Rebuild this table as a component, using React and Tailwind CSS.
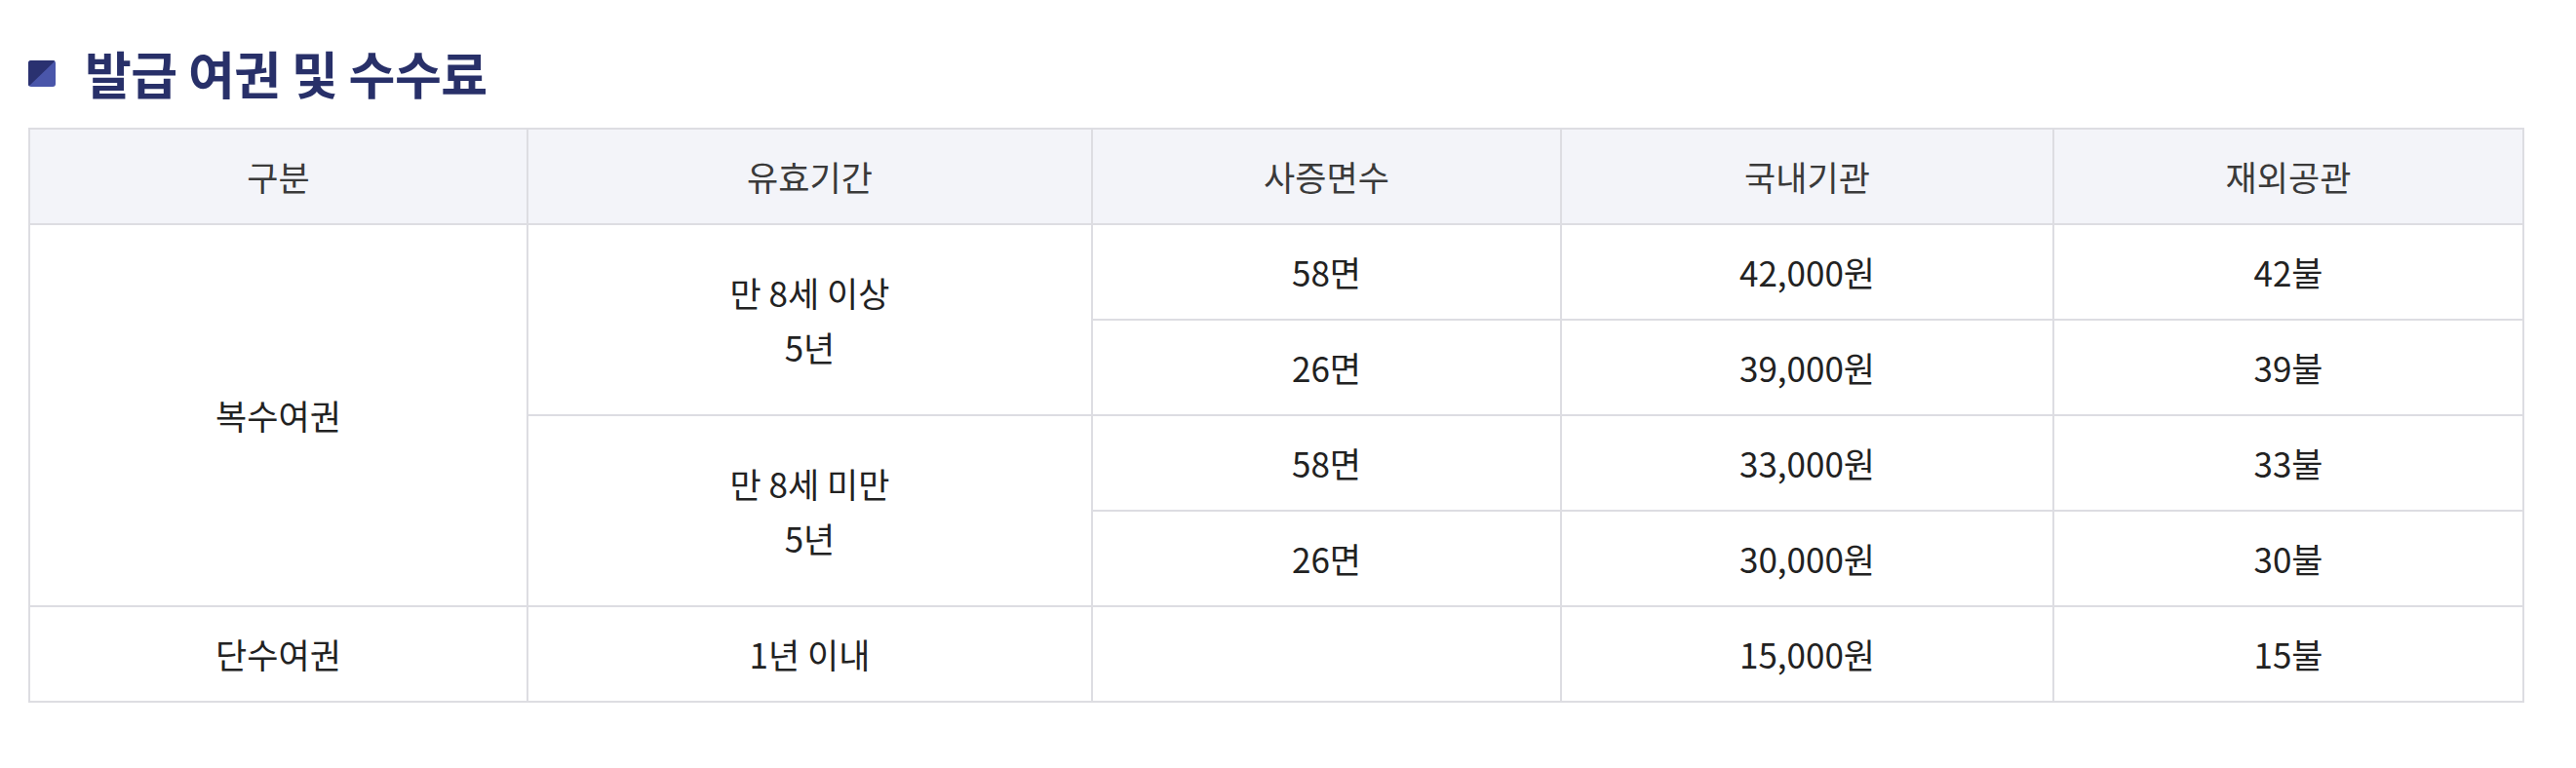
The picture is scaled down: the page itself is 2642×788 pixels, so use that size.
const rows = [
  { pages: "58면", domestic: "42,000원", abroad: "42불" },
  { pages: "26면", domestic: "39,000원", abroad: "39불" },
  { pages: "58면", domestic: "33,000원", abroad: "33불" },
  { pages: "26면", domestic: "30,000원", abroad: "30불" },
];

function TitleIcon() {
  return (
    <svg width="28" height="27" viewBox="0 0 28 27" className="shrink-0">
      <defs>
        <clipPath id="r">
          <rect x="0" y="0" width="28" height="27" rx="3" />
        </clipPath>
      </defs>
      <g clipPath="url(#r)">
        <rect x="0" y="0" width="28" height="27" fill="#4a56aa" />
        <polygon points="0,0 28,0 0,27" fill="#2a3170" />
      </g>
    </svg>
  );
}

export default function App() {
  const cell = "border-2 border-[#dddde2] text-center align-middle";
  return (
    <div className="w-[2642px] h-[788px] bg-white font-['Noto_Sans_CJK_KR',sans-serif]">
      <div className="pl-[29px] pt-[44px] pr-[52px]">
        {/* Title */}
        <div className="flex items-center gap-[30px] h-[62px]">
          <TitleIcon />
          <h2 className="text-[52px] font-bold text-[#283069] leading-none tracking-[-0.5px]">
            발급 여권 및 수수료
          </h2>
        </div>

        {/* Fee table */}
        <table className="mt-[25px] w-[2558px] table-fixed border-collapse text-[35px] leading-[1.6]">
          <colgroup>
            <col className="w-[511px]" />
            <col className="w-[579px]" />
            <col className="w-[481px]" />
            <col className="w-[505px]" />
            <col className="w-[482px]" />
          </colgroup>
          <thead>
            <tr className="h-[98px] bg-[#f3f4f9] text-[#3a3a3a]">
              <th className={`${cell} font-normal`}>구분</th>
              <th className={`${cell} font-normal`}>유효기간</th>
              <th className={`${cell} font-normal`}>사증면수</th>
              <th className={`${cell} font-normal`}>국내기관</th>
              <th className={`${cell} font-normal`}>재외공관</th>
            </tr>
          </thead>
          <tbody className="text-[#222]">
            {rows.map((r, i) => (
              <tr key={i} className="h-[98px]">
                {i === 0 && (
                  <td rowSpan={4} className={cell}>
                    복수여권
                  </td>
                )}
                {i === 0 && (
                  <td rowSpan={2} className={cell}>
                    만 8세 이상
                    <br />
                    5년
                  </td>
                )}
                {i === 2 && (
                  <td rowSpan={2} className={cell}>
                    만 8세 미만
                    <br />
                    5년
                  </td>
                )}
                <td className={cell}>{r.pages}</td>
                <td className={cell}>{r.domestic}</td>
                <td className={cell}>{r.abroad}</td>
              </tr>
            ))}
            <tr className="h-[98px]">
              <td className={cell}>단수여권</td>
              <td className={cell}>1년 이내</td>
              <td className={cell}></td>
              <td className={cell}>15,000원</td>
              <td className={cell}>15불</td>
            </tr>
          </tbody>
        </table>
      </div>
    </div>
  );
}
